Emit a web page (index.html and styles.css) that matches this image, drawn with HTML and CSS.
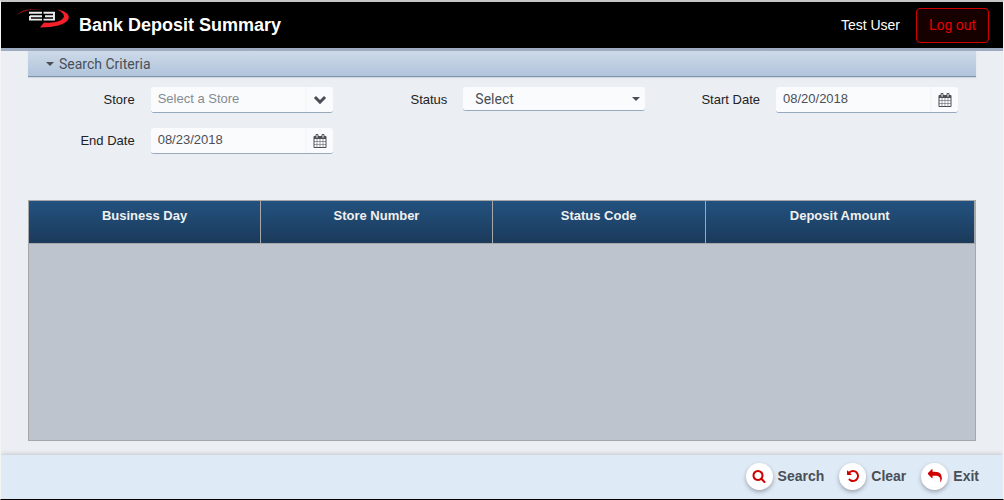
FILE: index.html
```html
<!DOCTYPE html>
<html lang="en">

<head>
    <meta charset="utf-8">
    <title>Bank Deposit Summary</title>
    <link rel="stylesheet" href="styles.css">
</head>

<body>

    <!-- Icon shapes shared by the buttons -->
    <svg class="sprite" aria-hidden="true">
        <symbol id="calendar" viewBox="0 0 1792 1792">
            <path d="M192 1664h288v-288h-288v288zm352 0h320v-288h-320v288zm-352-352h288v-320h-288v320zm352 0h320v-320h-320v320zm-352-384h288v-288h-288v288zm736 736h320v-288h-320v288zm-384-736h320v-288h-320v288zm768 736h288v-288h-288v288zm-384-352h320v-320h-320v320zm-352-864v-288q0-13-9.500-22.500t-22.500-9.500h-64q-13 0-22.500 9.500t-9.500 22.500v288q0 13 9.500 22.500t22.500 9.500h64q13 0 22.500-9.500t9.500-22.500zm736 864h288v-320h-288v320zm-384-384h320v-288h-320v288zm384 0h288v-288h-288v288zm32-480v-288q0-13-9.500-22.500t-22.500-9.500h-64q-13 0-22.500 9.500t-9.500 22.500v288q0 13 9.500 22.500t22.500 9.500h64q13 0 22.500-9.500t9.500-22.500zm384-64v1280q0 52-38 90t-90 38h-1408q-52 0-90-38t-38-90v-1280q0-52 38-90t90-38h128v-96q0-66 47-113t113-47h64q66 0 113 47t47 113v96h384v-96q0-66 47-113t113-47h64q66 0 113 47t47 113v96h128q52 0 90 38t38 90z" />
        </symbol>
        <symbol id="chevron" viewBox="0 0 14 14">
            <path d="M7 11.200 0.900 5.100 3 3 7 7 11 3 13.100 5.100z" />
        </symbol>
        <symbol id="search" viewBox="0 0 1792 1792">
            <path d="M1216 832q0-185-131.500-316.500t-316.500-131.500-316.500 131.500-131.500 316.500 131.500 316.500 316.500 131.500 316.500-131.500 131.500-316.500zm512 832q0 52-38 90t-90 38q-54 0-90-38l-343-342q-179 124-399 124-143 0-273.500-55.500t-225-150-150-225-55.500-273.500 55.500-273.500 150-225 225-150 273.500-55.500 273.500 55.500 225 150 150 225 55.500 273.500q0 220-124 399l343 343q37 37 37 90z" />
        </symbol>
        <symbol id="undo" viewBox="0 0 1792 1792">
            <path d="M1664 896q0 156-61 298t-164 245-245 164-298 61q-172 0-327-72.500t-264-204.500q-7-10-6.500-22.500t8.500-20.500l137-138q10-9 25-9 16 2 23 12 73 95 179 147t225 52q104 0 198.500-40.500t163.500-109.500 109.500-163.500 40.500-198.500-40.500-198.500-109.500-163.500-163.500-109.500-198.500-40.500q-98 0-188 35.500t-160 101.500l137 138q31 30 14 69-17 40-59 40h-448q-26 0-45-19t-19-45v-448q0-42 40-59 39-17 69 14l130 129q107-101 244.500-156.500t284.500-55.500q156 0 298 61t245 164 164 245 61 298z" />
        </symbol>
        <symbol id="reply" viewBox="0 0 1792 1792">
            <path d="M1792 1120q0 166-127 451-3 7-10.500 24t-13.500 30-13 22q-12 17-28 17-15 0-23.500-10t-8.500-25q0-9 2.500-26.500t2.500-23.500q5-68 5-123 0-112-19.500-200.500t-54-153.500-89.500-110-117.500-73-143.500-42.500-163-20.500-184-6h-224v256q0 26-19 45t-45 19-45-19l-512-512q-19-19-19-45t19-45l512-512q19-19 45-19t45 19 19 45v256h224q713 0 875 403 53 134 53 333z" />
        </symbol>
    </svg>

    <header class="topbar">
        <svg class="logo" viewBox="0 0 54 22" role="img" aria-label="Company logo">
            <path d="M0 7C4 2 13 0 25 1.500 14 1 6 3 0 7z" fill="#8c1218" />
            <path d="M40 1.500C49 3 54 7 51 12 48 16.500 38 19.500 23 19.500L27 14.500C37 15.500 46 13 47 8.500 47 6 44 3 40 1.500z" fill="#f5202a" />
            <path d="M12 4.800h13M13 8.200h12M12 11.600h13M13 8v4M26.500 4.800h11.500M28 8.200h9.500M26.500 11.600h11.500M37 4.500v7.500" fill="none" stroke="#ececec" stroke-width="1.900" />
        </svg>
        <h1>Bank Deposit Summary</h1>
        <span class="user">Test User</span>
        <button type="button" class="logout">Log out</button>
    </header>

    <main>
        <button type="button" class="panel-title" aria-expanded="true"><span class="caret"></span>Search Criteria</button>

        <form class="criteria" id="criteria">
            <div class="field">
                <label for="store">Store</label>
                <div class="group">
                    <input type="text" id="store" placeholder="Select a Store">
                    <button type="button" aria-label="Show stores"><svg class="icon"><use href="#chevron" /></svg></button>
                </div>
            </div>
            <div class="field">
                <label for="status">Status</label>
                <div class="select">
                    <select id="status">
                        <option>Select</option>
                    </select>
                </div>
            </div>
            <div class="field">
                <label for="start">Start Date</label>
                <div class="group">
                    <input type="text" id="start" value="08/20/2018">
                    <button type="button" aria-label="Pick start date"><svg class="icon"><use href="#calendar" /></svg></button>
                </div>
            </div>
            <div class="field">
                <label for="end">End Date</label>
                <div class="group">
                    <input type="text" id="end" value="08/23/2018">
                    <button type="button" aria-label="Pick end date"><svg class="icon"><use href="#calendar" /></svg></button>
                </div>
            </div>
        </form>

        <div class="grid">
            <table>
                <colgroup>
                    <col class="day">
                    <col class="number">
                    <col class="code">
                    <col class="amount">
                </colgroup>
                <thead>
                    <tr>
                        <th scope="col">Business Day</th>
                        <th scope="col">Store Number</th>
                        <th scope="col">Status Code</th>
                        <th scope="col">Deposit Amount</th>
                    </tr>
                </thead>
                <tbody></tbody>
            </table>
        </div>
    </main>

    <footer class="actions">
        <button type="submit" form="criteria"><span class="circle"><svg class="icon"><use href="#search" /></svg></span>Search</button>
        <button type="reset" form="criteria"><span class="circle"><svg class="icon"><use href="#undo" /></svg></span>Clear</button>
        <button type="button"><span class="circle"><svg class="icon"><use href="#reply" /></svg></span>Exit</button>
    </footer>

</body>

</html>
```

FILE: styles.css
```css
* {
    box-sizing: border-box;
}

body {
    display: flex;
    flex-direction: column;
    min-height: 100vh;
    margin: 0;
    border: 1px solid #f4f4f4;
    border-top: 2px solid #c4c6c8;
    border-bottom: 1px solid black;
    background-color: #ebeef3;
    color: #222;
    font-family: "Liberation Sans", Arial, sans-serif;
    font-size: 13px;
}

button,
input,
select {
    margin: 0;
    padding: 0;
    border: none;
    background: none;
    color: inherit;
    font: inherit;
}

.sprite {
    display: none;
}

.icon {
    display: block;
    width: 14px;
    height: 14px;
    fill: currentColor;
}

/* Header */
.topbar {
    display: flex;
    align-items: center;
    height: 49px;
    padding: 0 14px 0 16px;
    border-bottom: 3px solid #9eabc0;
    background-color: black;
    color: white;
}

.logo {
    align-self: flex-start;
    width: 54px;
    height: 22px;
    margin: 6px 8px 0 0;
}

h1 {
    flex: 1;
    margin: 0;
    font-size: 18px;
}

.user {
    margin-right: 16px;
    font-size: 14px;
}

.logout {
    width: 73px;
    height: 35px;
    border: 1px solid #d00000;
    border-radius: 4px;
    background-color: #160000;
    color: #e60000;
    font-family: Roboto, sans-serif;
    font-size: 14px;
}

/* Search criteria */
main {
    display: flex;
    flex: 1;
    flex-direction: column;
    padding: 0 27px 14px;
}

.panel-title {
    display: flex;
    align-items: center;
    height: 26px;
    padding-left: 18px;
    border-bottom: 1px solid #8093ac;
    background: linear-gradient(#cddae8, #b0c4db);
    box-shadow: 0 1px 1px #d3d8df;
    color: #4a4f57;
    font-family: Roboto, sans-serif;
    font-size: 14px;
}

.caret {
    margin-right: 5px;
    border: 4px solid transparent;
    border-top-color: currentColor;
    border-bottom: none;
}

.criteria {
    display: grid;
    grid-template-columns: repeat(3, 1fr);
    row-gap: 15px;
    padding: 10px 10px 46px 0;
}

.field {
    display: flex;
    height: 26px;
    padding-right: 8px;
}

.field label {
    flex: 1;
    padding-right: 16px;
    line-height: 26px;
    text-align: right;
}

.group,
.select {
    display: flex;
    width: 182px;
    border-bottom: 1px solid #99a9bd;
    border-radius: 3px;
    background-color: #fafbfd;
    color: #4a4f57;
}

.group input {
    flex: 1;
    min-width: 0;
    padding: 0 7px 2px;
    border-right: 2px solid #f4f6f9;
}

.group input::placeholder {
    color: #858b93;
}

.group button {
    display: flex;
    align-items: center;
    justify-content: center;
    width: 26px;
}

.select {
    position: relative;
    height: 24px;
}

.select select {
    flex: 1;
    padding-left: 12px;
    appearance: none;
    font-family: Roboto, sans-serif;
    font-size: 14px;
}

/* Drop-down arrow, drawn over the select */
.select::after {
    position: absolute;
    top: 10px;
    right: 5px;
    border: 4px solid transparent;
    border-top-color: currentColor;
    border-bottom: none;
    content: "";
    pointer-events: none;
}

/* Results */
.grid {
    flex: 1;
    border: 1px solid #a5a7aa;
    background-color: #bdc4ce;
}

table {
    width: 100%;
    border-collapse: collapse;
    table-layout: fixed;
}

thead {
    background: linear-gradient(#23527f, #1b3a5b);
}

th {
    height: 42px;
    padding: 7px 0 0;
    border-right: 1px solid #a5a7aa;
    border-bottom: 1px solid #a5a7aa;
    color: #f0f0f0;
    font-size: 13px;
    vertical-align: top;
}

.day,
.number {
    width: 24.5%;
}

.code {
    width: 22.5%;
}

/* Bottom bar */
.actions {
    display: flex;
    align-items: center;
    justify-content: flex-end;
    gap: 15px;
    height: 44px;
    padding: 0 24px 2px 0;
    background-color: #deeaf6;
    box-shadow: 0 -1px 4px #c4c6ca;
}

.actions button {
    display: flex;
    align-items: center;
    gap: 5px;
    color: #4a4f57;
    font-size: 14px;
    font-weight: bold;
}

.circle {
    display: flex;
    align-items: center;
    justify-content: center;
    width: 27px;
    height: 27px;
    border-radius: 50%;
    background-color: white;
    box-shadow: 0 2px 4px #9aa3ad;
    color: #d00000;
}
```
